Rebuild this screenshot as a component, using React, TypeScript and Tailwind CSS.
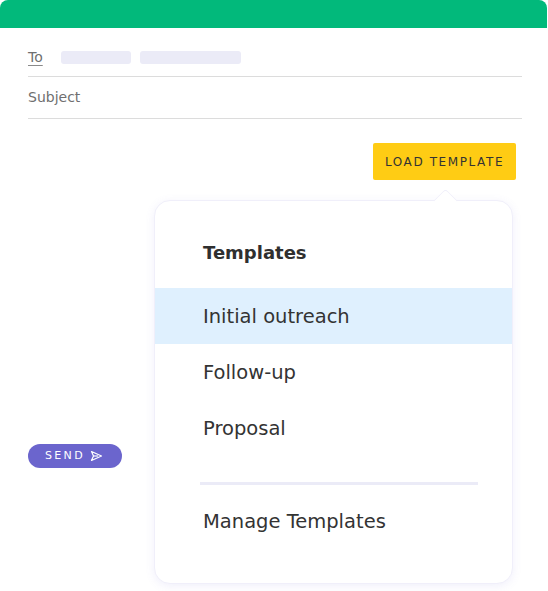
import React from 'react'

const font = { fontFamily: '"DejaVu Sans", "Noto Sans", sans-serif' }

const SendIcon = () => (
  <svg width="13" height="12" viewBox="0 0 13 12" fill="none" stroke="white" strokeWidth="1.2" strokeLinejoin="round">
    <path d="M1.5 1.5 L11.5 6 L1.5 10.5 L3.5 6 Z" />
    <path d="M3.5 6 L8 6" />
  </svg>
)

const templates = ['Initial outreach', 'Follow-up', 'Proposal']

const App = () => {
  return (
    <div className="relative w-[548px] h-[591px] bg-white overflow-hidden" style={font}>
      <div className="h-[28px] bg-[#02B97B] rounded-t-[8px] mr-[1px]"></div>

      <div className="pl-[28px] pr-[26px] flex flex-col">
        <div className="h-[49px] pt-[11px] flex items-center border-b border-[#DCDCDC]">
          <span className="text-[14px] text-[#6f6f6f] underline underline-offset-[3px] decoration-[#8a8a8a]">To</span>
          <div className="ml-[18px] w-[70px] h-[13px] rounded-[3px] bg-[#EBEBF7]"></div>
          <div className="ml-[9px] w-[101px] h-[13px] rounded-[3px] bg-[#EBEBF7]"></div>
        </div>
        <div className="h-[42px] flex items-center border-b border-[#DCDCDC]">
          <span className="text-[14px] text-[#6f6f6f]">Subject</span>
        </div>

        <button className="self-end mr-[6px] mt-[24px] h-[37px] w-[143px] bg-[#FFCC14] rounded-[2px] text-[12px] tracking-[1.6px] text-[#333333] flex items-center justify-center">
          LOAD TEMPLATE
        </button>

        <button className="mt-[264px] w-[94px] h-[24px] rounded-full bg-[#6B65CD] text-white text-[11px] tracking-[2.4px] flex items-center justify-center gap-[5px] pr-[2px]">
          SEND <SendIcon />
        </button>
      </div>

      {/* templates menu */}
      <div className="absolute left-[154px] top-[200px] w-[359px] h-[384px] bg-white rounded-[16px] border border-[#F0EFFA] shadow-[0_2px_10px_rgba(110,100,220,0.10)]">
        <div className="absolute left-[282px] top-[-9px] w-[17px] h-[17px] bg-white rotate-45 rounded-tl-[4px] border-l border-t border-[#F0EFFA]"></div>
        <div className="relative pt-[39px] pl-[48px] text-[18px] leading-[26px] font-bold text-[#2f2f2f]">Templates</div>
        <div className="relative mt-[22px] flex flex-col">
          {templates.map((t, i) => (
            <div
              key={t}
              className={`h-[56px] pl-[48px] pt-[2px] flex items-center text-[19.5px] text-[#333333] ${i === 0 ? 'bg-[#DFF0FE]' : ''}`}
            >
              {t}
            </div>
          ))}
        </div>
        <div className="mt-[26px] ml-[45px] w-[278px] h-[3px] bg-[#EBEBF7]"></div>
        <div className="mt-[24px] pl-[48px] text-[19.5px] leading-[26px] text-[#333333]">Manage Templates</div>
      </div>
    </div>
  )
}

export default App
